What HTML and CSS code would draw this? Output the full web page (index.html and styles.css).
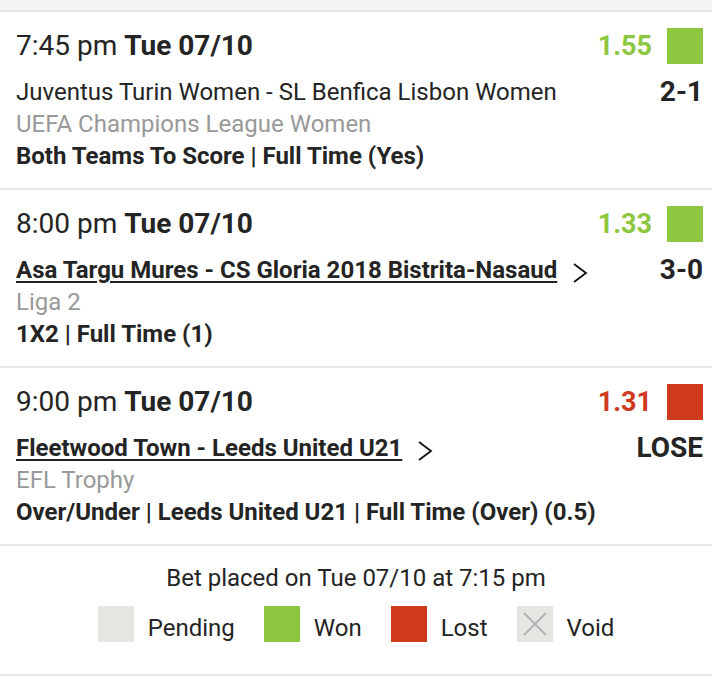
FILE: index.html
```html
<!DOCTYPE html>
<html>
<head>
<meta charset="utf-8">
<link rel="stylesheet" href="styles.css">
</head>
<body>
<div class="topbar"></div>
<section class="leg">
  <div class="leg-head">
    <div class="time">7:45 pm <b>Tue 07/10</b></div>
    <div class="odds won">1.55</div>
    <span class="status won"></span>
  </div>
  <div class="leg-body">
    <div class="info">
      <div class="match">Juventus Turin Women - SL Benfica Lisbon Women</div>
      <div class="league">UEFA Champions League Women</div>
      <div class="bet">Both Teams To Score | Full Time (Yes)</div>
    </div>
    <div class="score">2-1</div>
  </div>
</section>
<section class="leg">
  <div class="leg-head">
    <div class="time">8:00 pm <b>Tue 07/10</b></div>
    <div class="odds won">1.33</div>
    <span class="status won"></span>
  </div>
  <div class="leg-body">
    <div class="info">
      <div class="match"><a class="link">Asa Targu Mures - CS Gloria 2018 Bistrita-Nasaud</a><svg class="chev" width="16" height="20" viewBox="0 0 16 20"><path d="M2 1 L14 10 L2 19" fill="none" stroke="#111" stroke-width="1.8"/></svg></div>
      <div class="league">Liga 2</div>
      <div class="bet">1X2 | Full Time (1)</div>
    </div>
    <div class="score">3-0</div>
  </div>
</section>
<section class="leg">
  <div class="leg-head">
    <div class="time">9:00 pm <b>Tue 07/10</b></div>
    <div class="odds lost">1.31</div>
    <span class="status lost"></span>
  </div>
  <div class="leg-body">
    <div class="info">
      <div class="match"><a class="link">Fleetwood Town - Leeds United U21</a><svg class="chev" width="16" height="20" viewBox="0 0 16 20"><path d="M2 1 L14 10 L2 19" fill="none" stroke="#111" stroke-width="1.8"/></svg></div>
      <div class="league">EFL Trophy</div>
      <div class="bet">Over/Under | Leeds United U21 | Full Time (Over) (0.5)</div>
    </div>
    <div class="score">LOSE</div>
  </div>
</section>
<footer class="foot">
  <div class="placed">Bet placed on Tue 07/10 at 7:15 pm</div>
  <div class="legend">
    <div class="item"><span class="status pending"></span><span class="lbl">Pending</span></div>
    <div class="item"><span class="status won"></span><span class="lbl">Won</span></div>
    <div class="item"><span class="status lost"></span><span class="lbl">Lost</span></div>
    <div class="item"><span class="status void"><svg width="36" height="36" viewBox="0 0 36 36"><path d="M7 7 L29 29 M29 7 L7 29" stroke="#b3b3b1" stroke-width="2"/></svg></span><span class="lbl">Void</span></div>
  </div>
</footer>
</body>
</html>
```
FILE: styles.css
```css
html, body {
  margin: 0;
  padding: 0;
  background: #fff;
}
body {
  font-family: Roboto, "Liberation Sans", sans-serif;
  color: #242424;
  width: 712px;
}
.topbar {
  height: 10px;
  background: #f3f3f1;
  border-bottom: 2px solid #e6e6e4;
}
.leg {
  padding: 16px 9px 16px 16px;
  border-bottom: 2px solid #e6e6e4;
}
.leg-head {
  display: flex;
  align-items: center;
  height: 36px;
}
.time {
  font-size: 28px;
  flex: 1;
  line-height: 36px;
}
.time b {
  font-weight: 700;
}
.odds {
  font-size: 27px;
  font-weight: 700;
  margin-right: 15px;
}
.odds.won { color: #8dc63f; }
.odds.lost { color: #cf3a1f; }
.status {
  display: block;
  width: 36px;
  height: 36px;
  flex: none;
}
.status.won { background: #8dc63f; }
.status.lost { background: #cf3a1f; }
.status.pending { background: #e5e5e2; }
.status.void { background: #e5e5e2; }
.status.void svg { display: block; }
.leg-body {
  display: flex;
  margin-top: 12px;
}
.info {
  flex: 1;
  font-size: 24px;
  line-height: 32px;
}
.match {
  display: flex;
  align-items: center;
}
.link {
  font-weight: 700;
  color: #242424;
  text-decoration: underline;
  text-decoration-thickness: 2px;
  text-underline-offset: 3px;
}
.chev {
  margin-left: 15px;
  margin-top: 6px;
  display: block;
}
.league {
  color: #999;
}
.bet {
  font-weight: 700;
}
.score {
  font-size: 28px;
  font-weight: 700;
  line-height: 32px;
}
.foot {
  border-bottom: 2px solid #e6e6e4;
  height: 130px;
  padding-top: 18px;
  box-sizing: border-box;
}
.placed {
  text-align: center;
  font-size: 24px;
  line-height: 28px;
}
.legend {
  display: flex;
  justify-content: center;
  gap: 29px;
  margin-top: 14px;
}
.item {
  display: flex;
  align-items: center;
  gap: 14px;
  font-size: 24px;
}
.lbl {
  margin-top: 8px;
}
```
